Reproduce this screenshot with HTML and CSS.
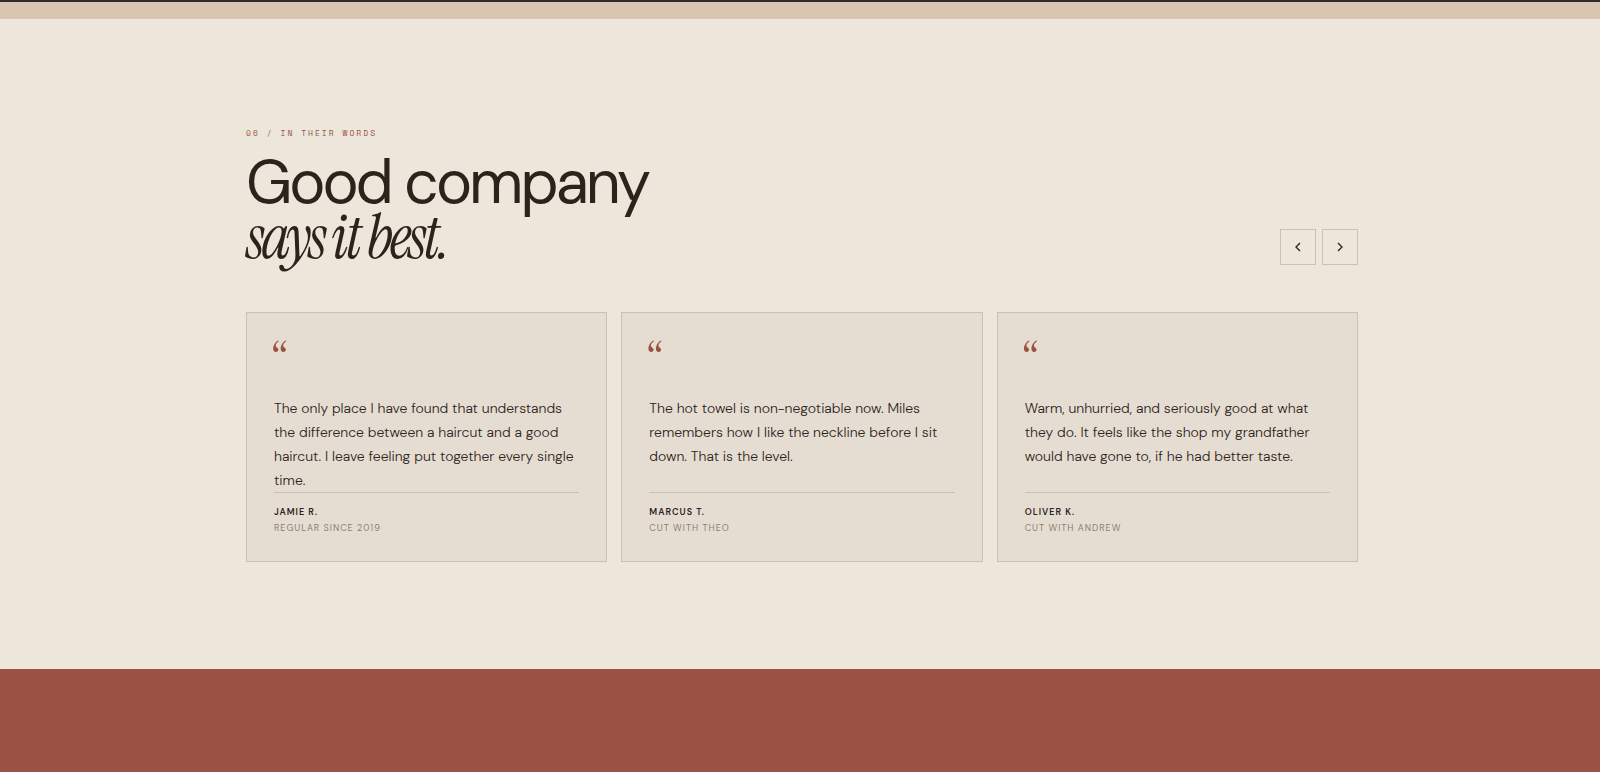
FILE: index.html
```html
<!DOCTYPE html>
<html lang="en">
<head>
  <meta charset="UTF-8">
  <title>In Their Words</title>
  <meta name="viewport" content="width=device-width, initial-scale=1.0">
  <link rel="stylesheet" href="styles.css">
</head>
<body>
  <div class="band-dark"></div>
  <div class="band-sand"></div>

  <section class="testimonials">
    <div class="container">
      <header class="section-head">
        <div>
          <p class="eyebrow">06 / IN THEIR WORDS</p>
          <h2 class="section-title">Good company <em>says it best.</em></h2>
        </div>
        <div class="slider-nav">
          <button class="nav-btn" type="button" aria-label="Previous">
            <svg viewBox="0 0 24 24"><path d="M15 18l-6-6 6-6"/></svg>
          </button>
          <button class="nav-btn" type="button" aria-label="Next">
            <svg viewBox="0 0 24 24"><path d="M9 18l6-6-6-6"/></svg>
          </button>
        </div>
      </header>

      <div class="cards">
        <article class="card">
          <div class="quote-mark">“</div>
          <p class="quote-text">The only place I have found that understands the difference between a haircut and a good haircut. I leave feeling put together every single time.</p>
          <footer class="card-footer">
            <div class="name">JAMIE R.</div>
            <div class="role">REGULAR SINCE 2019</div>
          </footer>
        </article>

        <article class="card">
          <div class="quote-mark">“</div>
          <p class="quote-text">The hot towel is non-negotiable now. Miles remembers how I like the neckline before I sit down. That is the level.</p>
          <footer class="card-footer">
            <div class="name">MARCUS T.</div>
            <div class="role">CUT WITH THEO</div>
          </footer>
        </article>

        <article class="card">
          <div class="quote-mark">“</div>
          <p class="quote-text">Warm, unhurried, and seriously good at what they do. It feels like the shop my grandfather would have gone to, if he had better taste.</p>
          <footer class="card-footer">
            <div class="name">OLIVER K.</div>
            <div class="role">CUT WITH ANDREW</div>
          </footer>
        </article>
      </div>
    </div>
  </section>

  <div class="band-clay"></div>
</body>
</html>
```
FILE: styles.css
```css
:root {
  --cream: #ede6da;
  --card: #e6ddd2;
  --line: #cbc1b4;
  --ink: #2c231b;
  --muted: #8b8073;
  --clay: #9b5243;
}

* {
  box-sizing: border-box;
}

body {
  margin: 0;
  min-height: 100vh;
  display: flex;
  flex-direction: column;
  background: var(--cream);
  color: var(--ink);
  font-family: "DM Sans", Inter, "Liberation Sans", sans-serif;
}

h2, p {
  margin: 0;
}

.band-dark {
  height: 2px;
  background: #302b2c;
}

.band-sand {
  height: 17px;
  background: #d9c6b2;
}

.band-clay {
  flex: 1;
  background: var(--clay);
}

.testimonials {
  padding: 108px 20px 107px 24px;
}

.container {
  max-width: 1112px;
  margin: 0 auto;
}

.section-head {
  display: flex;
  justify-content: space-between;
  align-items: flex-end;
  margin-bottom: 47px;
}

.eyebrow {
  font-family: "Space Mono", "DejaVu Sans Mono", monospace;
  font-size: 8px;
  line-height: 12px;
  letter-spacing: 2px;
  color: var(--clay);
  margin-bottom: 16px;
}

.section-title {
  font-size: 61px;
  font-weight: 400;
  line-height: 55px;
  letter-spacing: -3px;
}

.section-title em {
  display: block;
  font-family: "Instrument Serif", "Liberation Serif", serif;
  font-style: italic;
}

.slider-nav {
  display: flex;
  gap: 6px;
}

.nav-btn {
  width: 36px;
  height: 36px;
  padding: 0;
  display: flex;
  align-items: center;
  justify-content: center;
  background: none;
  border: 1px solid var(--line);
  color: var(--ink);
  cursor: pointer;
}

.nav-btn:hover {
  background: var(--card);
}

.nav-btn svg {
  width: 16px;
  height: 16px;
  fill: none;
  stroke: currentColor;
  stroke-width: 2;
}

.cards {
  display: grid;
  grid-template-columns: repeat(3, 1fr);
  gap: 14px;
}

.card {
  display: flex;
  flex-direction: column;
  padding: 27px 27px 26px;
  background: var(--card);
  border: 1px solid var(--line);
}

.quote-mark {
  margin-bottom: 10px;
  font-family: "Instrument Serif", "Liberation Serif", serif;
  font-size: 50px;
  line-height: 46px;
  color: var(--clay);
}

.quote-text {
  font-size: 14px;
  font-weight: 300;
  line-height: 24px;
}

.card-footer {
  margin-top: auto;
  padding-top: 12px;
  border-top: 1px solid var(--line);
  display: grid;
  gap: 2px;
  font-size: 9px;
  line-height: 14px;
  letter-spacing: 1px;
}

.name {
  font-weight: 600;
}

.role {
  color: var(--muted);
}

@media (max-width: 860px) {
  .cards {
    grid-template-columns: 1fr;
  }
}
```
